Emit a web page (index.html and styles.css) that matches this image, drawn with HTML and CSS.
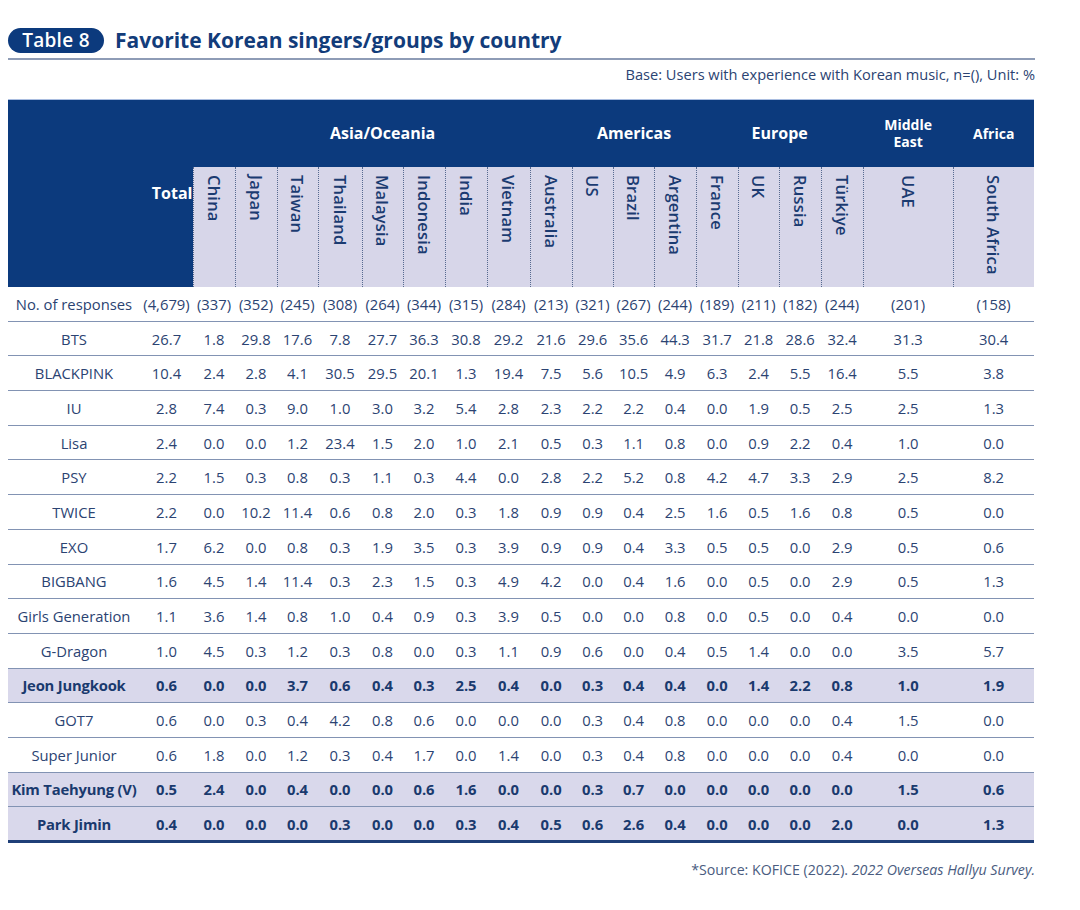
FILE: index.html
```html
<!DOCTYPE html>
<html lang="en">
<head>
<meta charset="utf-8">
<title>Table 8 Favorite Korean singers/groups by country</title>
<link rel="stylesheet" href="styles.css">
</head>
<body>
<div class="page">
  <div class="title-bar">
    <span class="pill">Table 8</span>
    <h1 class="title">Favorite Korean singers/groups by country</h1>
  </div>
  <div class="base">Base: Users with experience with Korean music, n=(), Unit: %</div>
  <table class="data">
    <colgroup>
      <col class="c-label"><col class="c-total">
      <col style="width:42px"><col style="width:42px"><col style="width:41px"><col style="width:44px">
      <col style="width:41px"><col style="width:42px"><col style="width:42px"><col style="width:43px">
      <col style="width:42px"><col style="width:41px"><col style="width:41px"><col style="width:42px">
      <col style="width:42px"><col style="width:41px"><col style="width:42px"><col style="width:42px">
      <col class="c-uae"><col class="c-sa">
    </colgroup>
    <thead>
      <tr class="region-row">
        <th class="dark" rowspan="2"></th>
        <th class="dark total-h" rowspan="2">Total</th>
        <th class="dark region" colspan="9">Asia/Oceania</th>
        <th class="dark region" colspan="3">Americas</th>
        <th class="dark region" colspan="4">Europe</th>
        <th class="dark region small"><span class="two-line">Middle<br>East</span></th>
        <th class="dark region small">Africa</th>
      </tr>
      <tr class="country-row">
        <th class="country"><span>China</span></th>
        <th class="country"><span>Japan</span></th>
        <th class="country"><span>Taiwan</span></th>
        <th class="country"><span>Thailand</span></th>
        <th class="country"><span>Malaysia</span></th>
        <th class="country"><span>Indonesia</span></th>
        <th class="country"><span>India</span></th>
        <th class="country"><span>Vietnam</span></th>
        <th class="country"><span>Australia</span></th>
        <th class="country"><span>US</span></th>
        <th class="country"><span>Brazil</span></th>
        <th class="country"><span>Argentina</span></th>
        <th class="country"><span>France</span></th>
        <th class="country"><span>UK</span></th>
        <th class="country"><span>Russia</span></th>
        <th class="country"><span>Türkiye</span></th>
        <th class="country"><span>UAE</span></th>
        <th class="country last"><span>South Africa</span></th>
      </tr>
    </thead>
    <tbody>
      <tr><td>No. of responses</td><td>(4,679)</td><td>(337)</td><td>(352)</td><td>(245)</td><td>(308)</td><td>(264)</td><td>(344)</td><td>(315)</td><td>(284)</td><td>(213)</td><td>(321)</td><td>(267)</td><td>(244)</td><td>(189)</td><td>(211)</td><td>(182)</td><td>(244)</td><td>(201)</td><td>(158)</td></tr>
      <tr><td>BTS</td><td>26.7</td><td>1.8</td><td>29.8</td><td>17.6</td><td>7.8</td><td>27.7</td><td>36.3</td><td>30.8</td><td>29.2</td><td>21.6</td><td>29.6</td><td>35.6</td><td>44.3</td><td>31.7</td><td>21.8</td><td>28.6</td><td>32.4</td><td>31.3</td><td>30.4</td></tr>
      <tr><td>BLACKPINK</td><td>10.4</td><td>2.4</td><td>2.8</td><td>4.1</td><td>30.5</td><td>29.5</td><td>20.1</td><td>1.3</td><td>19.4</td><td>7.5</td><td>5.6</td><td>10.5</td><td>4.9</td><td>6.3</td><td>2.4</td><td>5.5</td><td>16.4</td><td>5.5</td><td>3.8</td></tr>
      <tr><td>IU</td><td>2.8</td><td>7.4</td><td>0.3</td><td>9.0</td><td>1.0</td><td>3.0</td><td>3.2</td><td>5.4</td><td>2.8</td><td>2.3</td><td>2.2</td><td>2.2</td><td>0.4</td><td>0.0</td><td>1.9</td><td>0.5</td><td>2.5</td><td>2.5</td><td>1.3</td></tr>
      <tr><td>Lisa</td><td>2.4</td><td>0.0</td><td>0.0</td><td>1.2</td><td>23.4</td><td>1.5</td><td>2.0</td><td>1.0</td><td>2.1</td><td>0.5</td><td>0.3</td><td>1.1</td><td>0.8</td><td>0.0</td><td>0.9</td><td>2.2</td><td>0.4</td><td>1.0</td><td>0.0</td></tr>
      <tr><td>PSY</td><td>2.2</td><td>1.5</td><td>0.3</td><td>0.8</td><td>0.3</td><td>1.1</td><td>0.3</td><td>4.4</td><td>0.0</td><td>2.8</td><td>2.2</td><td>5.2</td><td>0.8</td><td>4.2</td><td>4.7</td><td>3.3</td><td>2.9</td><td>2.5</td><td>8.2</td></tr>
      <tr><td>TWICE</td><td>2.2</td><td>0.0</td><td>10.2</td><td>11.4</td><td>0.6</td><td>0.8</td><td>2.0</td><td>0.3</td><td>1.8</td><td>0.9</td><td>0.9</td><td>0.4</td><td>2.5</td><td>1.6</td><td>0.5</td><td>1.6</td><td>0.8</td><td>0.5</td><td>0.0</td></tr>
      <tr><td>EXO</td><td>1.7</td><td>6.2</td><td>0.0</td><td>0.8</td><td>0.3</td><td>1.9</td><td>3.5</td><td>0.3</td><td>3.9</td><td>0.9</td><td>0.9</td><td>0.4</td><td>3.3</td><td>0.5</td><td>0.5</td><td>0.0</td><td>2.9</td><td>0.5</td><td>0.6</td></tr>
      <tr><td>BIGBANG</td><td>1.6</td><td>4.5</td><td>1.4</td><td>11.4</td><td>0.3</td><td>2.3</td><td>1.5</td><td>0.3</td><td>4.9</td><td>4.2</td><td>0.0</td><td>0.4</td><td>1.6</td><td>0.0</td><td>0.5</td><td>0.0</td><td>2.9</td><td>0.5</td><td>1.3</td></tr>
      <tr><td>Girls Generation</td><td>1.1</td><td>3.6</td><td>1.4</td><td>0.8</td><td>1.0</td><td>0.4</td><td>0.9</td><td>0.3</td><td>3.9</td><td>0.5</td><td>0.0</td><td>0.0</td><td>0.8</td><td>0.0</td><td>0.5</td><td>0.0</td><td>0.4</td><td>0.0</td><td>0.0</td></tr>
      <tr><td>G-Dragon</td><td>1.0</td><td>4.5</td><td>0.3</td><td>1.2</td><td>0.3</td><td>0.8</td><td>0.0</td><td>0.3</td><td>1.1</td><td>0.9</td><td>0.6</td><td>0.0</td><td>0.4</td><td>0.5</td><td>1.4</td><td>0.0</td><td>0.0</td><td>3.5</td><td>5.7</td></tr>
      <tr class="hl"><td>Jeon Jungkook</td><td>0.6</td><td>0.0</td><td>0.0</td><td>3.7</td><td>0.6</td><td>0.4</td><td>0.3</td><td>2.5</td><td>0.4</td><td>0.0</td><td>0.3</td><td>0.4</td><td>0.4</td><td>0.0</td><td>1.4</td><td>2.2</td><td>0.8</td><td>1.0</td><td>1.9</td></tr>
      <tr><td>GOT7</td><td>0.6</td><td>0.0</td><td>0.3</td><td>0.4</td><td>4.2</td><td>0.8</td><td>0.6</td><td>0.0</td><td>0.0</td><td>0.0</td><td>0.3</td><td>0.4</td><td>0.8</td><td>0.0</td><td>0.0</td><td>0.0</td><td>0.4</td><td>1.5</td><td>0.0</td></tr>
      <tr><td>Super Junior</td><td>0.6</td><td>1.8</td><td>0.0</td><td>1.2</td><td>0.3</td><td>0.4</td><td>1.7</td><td>0.0</td><td>1.4</td><td>0.0</td><td>0.3</td><td>0.4</td><td>0.8</td><td>0.0</td><td>0.0</td><td>0.0</td><td>0.4</td><td>0.0</td><td>0.0</td></tr>
      <tr class="hl"><td>Kim Taehyung (V)</td><td>0.5</td><td>2.4</td><td>0.0</td><td>0.4</td><td>0.0</td><td>0.0</td><td>0.6</td><td>1.6</td><td>0.0</td><td>0.0</td><td>0.3</td><td>0.7</td><td>0.0</td><td>0.0</td><td>0.0</td><td>0.0</td><td>0.0</td><td>1.5</td><td>0.6</td></tr>
      <tr class="hl last-row"><td>Park Jimin</td><td>0.4</td><td>0.0</td><td>0.0</td><td>0.0</td><td>0.3</td><td>0.0</td><td>0.0</td><td>0.3</td><td>0.4</td><td>0.5</td><td>0.6</td><td>2.6</td><td>0.4</td><td>0.0</td><td>0.0</td><td>0.0</td><td>2.0</td><td>0.0</td><td>1.3</td></tr>
    </tbody>
  </table>
  <div class="source">*Source: KOFICE (2022). <em>2022 Overseas Hallyu Survey.</em></div>
</div>
</body>
</html>
```

FILE: styles.css
```css
* { box-sizing: border-box; }
html, body { margin: 0; padding: 0; background: #ffffff; }
body {
  font-family: "Open Sans", "Noto Sans", "Liberation Sans", sans-serif;
  color: #2b4372;
}
.page {
  width: 1080px;
  padding: 27px 0 0 8px;
}
.title-bar {
  width: 1027px;
  display: flex;
  align-items: center;
  gap: 11px;
  padding-bottom: 5px;
  border-bottom: 2px solid #8e9cb6;
}
.pill {
  display: inline-block;
  width: 96px;
  height: 25px;
  line-height: 25px;
  text-align: center;
  border-radius: 13px;
  background: #0c3a7d;
  color: #ffffff;
  font-size: 19px;
  font-weight: 600;
  letter-spacing: 0.3px;
}
.title {
  margin: 0;
  font-size: 21px;
  line-height: 26px;
  font-weight: 700;
  color: #123c7a;
  letter-spacing: 0;
}
.base {
  width: 1027px;
  text-align: right;
  font-size: 14.6px;
  line-height: 18px;
  color: #2b4372;
  padding-top: 5px;
  height: 39px;
}
.data {
  width: 1026px;
  table-layout: fixed;
  border-collapse: collapse;
  border-top: 1px solid #a9bde0;
}
.c-label { width: 132px; }
.c-total { width: 53px; }
.c-uae { width: 90px; }
.c-sa { width: 81px; }
.dark {
  background: #0c3a7d;
  color: #ffffff;
  font-weight: 700;
}
.region-row th { height: 67px; padding: 0; }
.region {
  font-size: 16px;
  text-align: center;
  vertical-align: middle;
}
.region.small { font-size: 14px; }
.two-line { display: inline-block; line-height: 17px; }
.total-h {
  font-size: 16px;
  text-align: right;
  vertical-align: middle;
  padding-right: 9px;
}
.country-row th { height: 120px; }
.country {
  background: #d7d6e9;
  color: #1b3b71;
  font-weight: 600;
  font-size: 16.5px;
  vertical-align: top;
  padding: 8px 0 0;
  border-left: 1px dotted #56698f;
}
.country span {
  display: inline-block;
  writing-mode: vertical-rl;
  line-height: 19px;
  letter-spacing: 0.2px;
}
td {
  height: 34.7px;
  padding: 0;
  text-align: center;
  vertical-align: middle;
  font-size: 14.8px;
  color: #2b4372;
  border-bottom: 1.5px solid #8293b3;
  white-space: nowrap;
}
tr.hl td {
  background: #d9d8eb;
  font-weight: 700;
  color: #1a3a6e;
}
tr.hl td:first-child { letter-spacing: -0.2px; }
tr.last-row td { border-bottom: 3px solid #1f3f78; }
.source {
  width: 1027px;
  text-align: right;
  font-size: 14.2px;
  color: #4a5c80;
  padding-top: 17px;
}
.source em { font-style: italic; }
```
